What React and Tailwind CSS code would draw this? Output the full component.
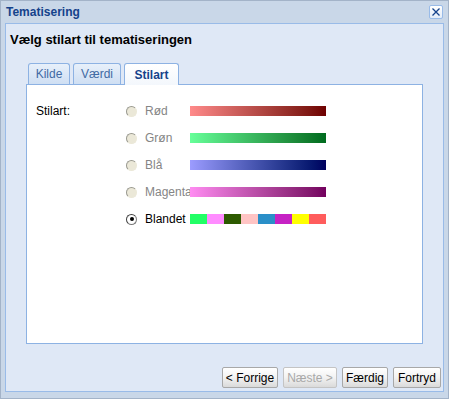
import React from "react";

const font = { fontFamily: "'Liberation Sans', Arial, sans-serif" };

const styles = [
    { label: "Rød", bar: "bg-gradient-to-r from-[#ff8a8a] to-[#6e0000]" },
    { label: "Grøn", bar: "bg-gradient-to-r from-[#66ff99] to-[#006b1e]" },
    { label: "Blå", bar: "bg-gradient-to-r from-[#9c9cff] to-[#00005e]" },
    { label: "Magenta", bar: "bg-gradient-to-r from-[#ff8cf2] to-[#73005e]" },
];

const mixed = ["bg-[#22ff66]", "bg-[#ff8cff]", "bg-[#2d5a00]", "bg-[#ffc4c4]", "bg-[#2a8fc8]", "bg-[#c622c4]", "bg-[#ffff00]", "bg-[#ff5c5c]"];

const Radio = ({ checked }) => (
    <div
        className={`w-[11px] h-[11px] shrink-0 rounded-full flex items-center justify-center ${
            checked
                ? "bg-white border border-[#7a7a7a] border-l-[#404040] border-t-[#404040]"
                : "bg-[#ebe8d8] border border-[#ebe8d8] border-l-[#9a9a90] border-t-[#9a9a90]"
        }`}
    >
        {checked && <div className="w-[4px] h-[4px] rounded-full bg-black" />}
    </div>
);

const Tab = ({ label, active, w }) => (
    <div
        className={`h-[21px] ${w} rounded-t-[3px] border border-b-0 border-[#8db2e3] flex items-center justify-center text-[12px] ${
            active
                ? "bg-gradient-to-b from-white to-[#f3f7fc] text-[#15428b] font-bold h-[22px] -mb-[1px] relative"
                : "bg-gradient-to-b from-[#e8f0fa] to-[#cfdff3] text-[#416aa3]"
        }`}
    >
        {label}
    </div>
);

const Button = ({ label, w, disabled }) => (
    <div
        className={`h-[21px] ${w} rounded-[2px] border border-[#a8a8a8] bg-gradient-to-b from-white via-[#f2f2f2] to-[#dadada] flex items-center justify-center text-[12px] ${
            disabled ? "text-[#a8a8a8] border-[#c4c4c4]" : "text-black"
        }`}
    >
        {label}
    </div>
);

export default function App() {
    return (
        <div style={font} className="w-[449px] h-[399px] bg-[#c9d7e8] border border-[#a3b3c8] flex flex-col">
            {/* Header */}
            <div className="h-[22px] flex items-center justify-between pl-[5px] pr-[5px]">
                <span className="text-[12px] font-bold text-[#15428b]">Tematisering</span>
                <div className="w-[14px] h-[14px] bg-gradient-to-b from-white to-[#e3ecf8] border border-[#99bbe8] rounded-[2px] flex items-center justify-center">
                    <svg width="10" height="10" viewBox="0 0 10 10">
                        <path d="M1.5 1.5 L8.5 8.5 M8.5 1.5 L1.5 8.5" stroke="#15428b" strokeWidth="1.3" />
                    </svg>
                </div>
            </div>

            {/* Body */}
            <div className="mx-[4px] h-[369px] border border-[#99bbe8] bg-[#dfe8f6] flex flex-col">
                <div className="pl-[4px] pt-[8px] text-[13px] font-bold text-black leading-[16px]">
                    Vælg stilart til tematiseringen
                </div>

                <div className="mx-[20px] mt-[15px] flex flex-col">
                    <div className="flex items-end gap-[3px] pl-[2px] border-b border-[#8db2e3]">
                        <Tab label="Kilde" w="w-[42px]" />
                        <Tab label="Værdi" w="w-[48px]" />
                        <Tab label="Stilart" w="w-[55px]" active />
                    </div>
                    <div className="h-[259px] bg-white border border-t-0 border-[#8db2e3] pl-[9px] pt-[20px] flex text-[12px]">
                        <div className="w-[90px] h-[12px] flex items-center">Stilart:</div>
                        <div className="flex flex-col gap-[15px]">
                            {styles.map((s) => (
                                <div key={s.label} className="h-[12px] flex items-center">
                                    <Radio />
                                    <span className="ml-[8px] w-[45px] shrink-0 whitespace-nowrap text-[#858585]">{s.label}</span>
                                    <div className={`relative w-[136px] h-[10px] shrink-0 ${s.bar}`} />
                                </div>
                            ))}
                            <div className="h-[12px] flex items-center">
                                <Radio checked />
                                <span className="ml-[8px] w-[45px] shrink-0 whitespace-nowrap text-black">Blandet</span>
                                <div className="relative w-[136px] h-[10px] shrink-0 flex">
                                    {mixed.map((c) => (
                                        <div key={c} className={`flex-1 ${c}`} />
                                    ))}
                                </div>
                            </div>
                        </div>
                    </div>
                </div>

                <div className="mt-auto mb-[3px] mr-[2px] flex justify-end gap-[5px]">
                    <Button label="< Forrige" w="w-[56px]" />
                    <Button label="Næste >" w="w-[54px]" disabled />
                    <Button label="Færdig" w="w-[46px]" />
                    <Button label="Fortryd" w="w-[48px]" />
                </div>
            </div>
        </div>
    );
}
